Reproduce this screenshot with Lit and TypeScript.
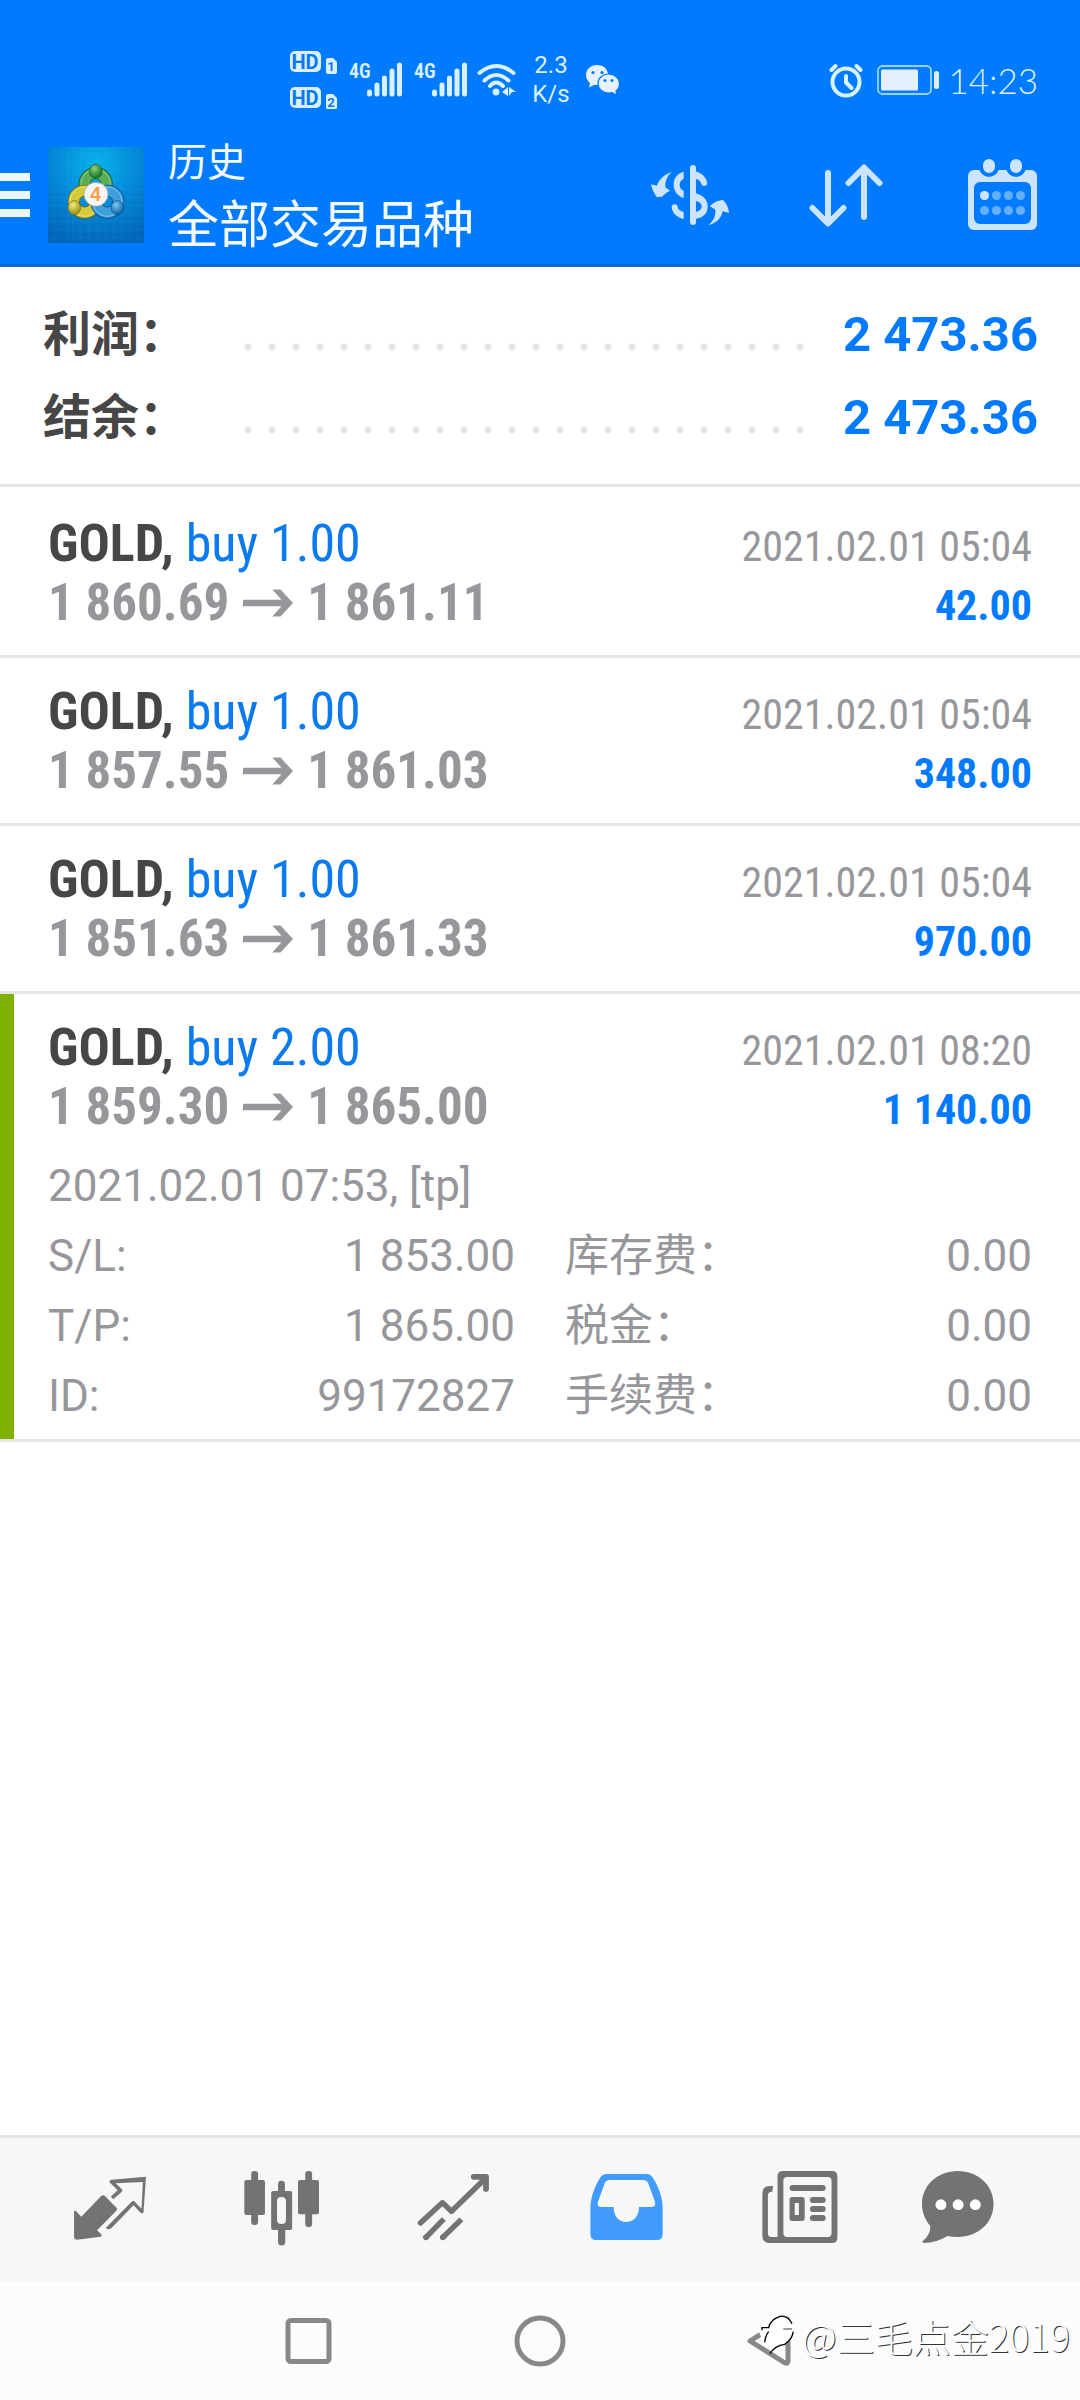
import { LitElement, html, css, svg, nothing } from "lit";
import { customElement, property, state } from "lit/decorators.js";

interface Deal {
  symbol: string;
  side: string;
  open: string;
  close: string;
  time: string;
  profit: string;
  opened?: string;
  details?: [string, string][];
}

const DEALS: Deal[] = [
  { symbol: "GOLD,", side: "buy 1.00", open: "1 860.69", close: "1 861.11", time: "2021.02.01 05:04", profit: "42.00" },
  { symbol: "GOLD,", side: "buy 1.00", open: "1 857.55", close: "1 861.03", time: "2021.02.01 05:04", profit: "348.00" },
  { symbol: "GOLD,", side: "buy 1.00", open: "1 851.63", close: "1 861.33", time: "2021.02.01 05:04", profit: "970.00" },
  {
    symbol: "GOLD,",
    side: "buy 2.00",
    open: "1 859.30",
    close: "1 865.00",
    time: "2021.02.01 08:20",
    profit: "1 140.00",
    opened: "2021.02.01 07:53, [tp]",
    details: [
      ["S/L:", "1 853.00"],
      ["库存费：", "0.00"],
      ["T/P:", "1 865.00"],
      ["税金：", "0.00"],
      ["ID:", "99172827"],
      ["手续费：", "0.00"],
    ],
  },
];

@customElement("status-bar")
export class StatusBar extends LitElement {
  static styles = css`
    :host {
      display: flex;
      align-items: center;
      height: 92px;
      padding: 34px 42px 0 290px;
      gap: 10px;
      color: #d9f1ff;
      font-family: Roboto, sans-serif;
    }
    svg {
      display: block;
      flex: none;
    }
    .tag {
      font: 600 20px "Roboto Condensed", Roboto, sans-serif;
    }
    .hd {
      font: 700 20px Roboto, sans-serif;
    }
    .sim {
      font: 700 13px Roboto, sans-serif;
    }
    .rate {
      width: 48px;
      font-size: 24px;
      line-height: 29px;
      text-align: center;
    }
    .right {
      display: flex;
      align-items: center;
      gap: 8px;
      margin-left: auto;
    }
    .time {
      font: 300 35px/44px Lato, sans-serif;
    }
  `;

  private bars(x: number) {
    return svg`
      <text class="tag" x=${x} y="27" fill="currentColor">4G</text>
      <g stroke="currentColor" stroke-width="5" stroke-linecap="round">
        <path d="M${x + 20.5} 41v2M${x + 28} 34v9M${x + 35.5} 27v16M${x + 43} 20v23M${x + 50.5} 14v29" />
      </g>`;
  }

  render() {
    return html`
      <svg width="49" height="58" viewBox="0 0 49 58" role="img" aria-label="HD 1, HD 2">
        <g fill="currentColor">
          <rect x="0" y="0" width="31" height="21" rx="5" />
          <rect x="0" y="36" width="31" height="21" rx="5" />
          <path d="M36 9q0-2 2-2h5l4 4v10q0 2-2 2h-7q-2 0-2-2z" />
          <path d="M36 45q0-2 2-2h5l4 4v10q0 1-2 1h-7q-2 0-2-1z" />
        </g>
        <g fill="#0a78f0" text-anchor="middle">
          <text class="hd" x="15" y="18">HD</text>
          <text class="hd" x="15" y="54">HD</text>
          <text class="sim" x="41" y="20">1</text>
          <text class="sim" x="41" y="56">2</text>
        </g>
      </svg>
      <svg width="118" height="58" viewBox="0 0 118 58" role="img" aria-label="4G">
        ${this.bars(0)} ${this.bars(65)}
      </svg>
      <svg width="40" height="58" viewBox="0 0 40 58" role="img" aria-label="Wi-Fi">
        <g fill="none" stroke="currentColor" stroke-width="4" stroke-linecap="round">
          <path d="M2.5 22Q19 8 36.500 22M7.500 29.500Q19 18.500 31.500 29.500M13 35Q19 28 26 35" />
        </g>
        <circle cx="19" cy="41" r="3.400" fill="currentColor" />
        <path d="M25 41l6-5v9zM32 36l7 5h-4l-3 4z" fill="currentColor" />
      </svg>
      <div class="rate">2.3<br />K/s</div>
      <svg width="36" height="58" viewBox="0 0 36 58" role="img" aria-label="WeChat">
        <path d="M12 14c-6.500 0-11 4.500-11 10 0 3.500 1.500 6 4 8l-1 4.500 5-2.500h3c6.500 0 11-4 11-10s-4.500-10-11-10z" fill="#e6f3ff" />
        <path d="M23.500 23c-6 0-10.500 4-10.500 9.500s4.500 9.500 10.500 9.500l3.500-.5 5 2.500-1-4c2-1.500 3.500-4 3.500-7.500 0-5.500-5-9.500-11-9.500z" fill="#e6f3ff" stroke="#007aff" stroke-width="1.200" />
        <g fill="#007aff">
          <circle cx="8" cy="21.500" r="1.600" />
          <circle cx="17" cy="21.500" r="1.600" />
          <circle cx="20" cy="29.500" r="1.500" />
          <circle cx="27" cy="29.500" r="1.500" />
        </g>
      </svg>
      <div class="right">
        <svg width="40" height="36" viewBox="0 0 40 36" role="img" aria-label="Alarm">
          <g fill="none" stroke="currentColor" stroke-width="4" stroke-linecap="round" stroke-linejoin="round">
            <circle cx="17" cy="20" r="13.500" />
            <path d="M17 14v6.500l5.500 5.500M2.500 8l4-4M31.500 8l-4-4" />
          </g>
        </svg>
        <svg width="63" height="30" viewBox="0 0 63 30" role="img" aria-label="Battery">
          <rect x="1" y="1" width="53" height="28" rx="4.500" fill="none" stroke="#9ad2ff" stroke-width="1.800" />
          <rect x="4" y="4.500" width="37" height="21" rx="1.500" fill="#e4f0ff" />
          <rect x="57" y="6" width="5" height="18" rx="2.500" fill="currentColor" />
        </svg>
        <div class="time">14:23</div>
      </div>
    `;
  }
}

@customElement("app-logo")
export class AppLogo extends LitElement {
  static styles = css`
    :host,
    svg {
      display: block;
    }
    .num {
      font: 700 58px "Liberation Sans", sans-serif;
    }
  `;

  private person(cx: number, cy: number, hx: number, hy: number, body: string, edge: string, head: string) {
    return svg`
      <circle cx=${cx} cy=${cy} r="33" fill="none" stroke=${edge} stroke-width="36" />
      <circle cx=${cx} cy=${cy} r="33" fill="none" stroke=${body} stroke-width="31" />
      <circle cx=${cx} cy=${cy} r="44" fill="none" stroke="#ffffff" stroke-opacity=".35" stroke-width="3" />
      <ellipse cx=${hx} cy=${hy} rx="19" ry="21" fill=${head} stroke=${edge} stroke-width="2" />`;
  }

  render() {
    const lines = [42, 84, 98, 121, 147, 172, 196, 222, 245, 270, 294];
    return html`
      <svg width="96" height="96" viewBox="24 21 288 288" role="img" aria-label="MetaTrader 4">
        <defs>
          <radialGradient id="sky" cx=".5" cy=".18" r=".85">
            <stop offset="0" stop-color="#08b2ec" />
            <stop offset=".5" stop-color="#0489d8" />
            <stop offset="1" stop-color="#0264b8" />
          </radialGradient>
          <radialGradient id="green" cx=".4" cy=".3" r=".7">
            <stop offset="0" stop-color="#8fd074" />
            <stop offset="1" stop-color="#16702a" />
          </radialGradient>
          <radialGradient id="yellow" cx=".4" cy=".3" r=".7">
            <stop offset="0" stop-color="#f3ea7c" />
            <stop offset="1" stop-color="#998f12" />
          </radialGradient>
          <radialGradient id="blue" cx=".4" cy=".3" r=".7">
            <stop offset="0" stop-color="#7cc8f2" />
            <stop offset="1" stop-color="#0b5fa5" />
          </radialGradient>
        </defs>
        <rect x="24" y="21" width="288" height="288" fill="url(#sky)" />
        <g stroke="#5cc8f5" stroke-opacity=".15" stroke-width="2">
          ${lines.map((v) => svg`<path d="M24 ${v}H312M${v} 21V309" />`)}
        </g>
        ${this.person(167, 132, 167, 94, "#58ad55", "#145c28", "url(#green)")}
        ${this.person(134, 185, 103, 203, "#d3cb3a", "#6d6714", "url(#yellow)")}
        ${this.person(202, 185, 232, 203, "#3d9fdb", "#0d4f8c", "url(#blue)")}
        <circle cx="168" cy="163" r="36" fill="#f6f5f5" stroke="#9a9a8a" stroke-width="2" />
        <text class="num" x="167" y="184" text-anchor="middle" fill="#f7a04a">4</text>
      </svg>
    `;
  }
}

@customElement("tool-bar")
export class ToolBar extends LitElement {
  static styles = css`
    :host {
      display: flex;
      align-items: center;
      height: 138px;
      color: #cce4ff;
    }
    button {
      display: grid;
      place-items: center;
      border: 0;
      padding: 0;
      background: none;
      color: inherit;
    }
    svg {
      display: block;
    }
    .menu {
      width: 30px;
      height: 96px;
      margin-right: 18px;
      color: #f0f8ff;
    }
    .title {
      flex: 1;
      margin-left: 24px;
      padding-bottom: 4px;
      color: #f4faff;
      font-family: "Noto Sans CJK SC", sans-serif;
      white-space: nowrap;
    }
    h1,
    p {
      margin: 0;
      font-weight: 400;
    }
    p {
      font-size: 39px;
      line-height: 56px;
    }
    h1 {
      font-size: 51px;
      line-height: 68px;
    }
    .tool {
      width: 156px;
      height: 138px;
    }
  `;

  render() {
    const dots = [16.5, 28.5, 40.5, 52.5];
    return html`
      <button class="menu" aria-label="菜单">
        <svg width="30" height="44" viewBox="0 0 30 44">
          <path d="M0 4h30M0 22h30M0 40h30" stroke="currentColor" stroke-width="8" />
        </svg>
      </button>
      <app-logo></app-logo>
      <div class="title">
        <p>历史</p>
        <h1>全部交易品种</h1>
      </div>
      <button class="tool" aria-label="交易品种">
        <svg width="78" height="60" viewBox="33 39 234 180" fill="currentColor">
          <rect x="150" y="39" width="18" height="180" rx="9" />
          <path d="M131 59C113 63 101 78 101 98C101 118 113 132 131 138V116C123 113 119 107 119 98C119 90 123 84 131 80Z" />
          <path d="M95 166a9 9 0 0 1 18 0C115 174 121 178 131 180V201C110 196 97 184 95 166Z" />
          <path d="M166 58C185 64 197 74 201 90a9 9 0 0 1-17 6C181 86 176 83 166 80Z" />
          <path d="M166 124C190 130 203 143 203 163C203 185 190 197 166 201V180C178 178 185 172 185 163C185 155 178 149 166 147Z" />
          <path d="M96 60C80 72 75 90 76 106L90 116C78 122 72 128 66 134L50 135C42 124 36 112 33 97L51 101C56 84 72 66 96 60Z" />
          <path d="M205 219C222 206 227 190 226 173L210 163C218 152 233 146 248 144L252 146C260 156 266 168 267 183L248 178C244 198 230 214 205 219Z" />
        </svg>
      </button>
      <button class="tool" aria-label="排序">
        <svg width="76" height="64" viewBox="0 0 76 64">
          <path
            d="M20 10v49M4.500 45L20 60.500L35.500 45M56 54V5M40.500 20L56 4.500L71.500 20"
            fill="none" stroke="currentColor" stroke-width="6" stroke-linecap="round" stroke-linejoin="round"
          />
        </svg>
      </button>
      <button class="tool" aria-label="日历">
        <svg width="70" height="77" viewBox="-1 -1 70 77">
          <rect x="0" y="12" width="69" height="60" rx="6" fill="currentColor" />
          <rect x="6" y="24" width="57" height="42" rx="6" fill="#007aff" />
          <g fill="currentColor" stroke="#007aff" stroke-width="4">
            <rect x="13" y="-1" width="16" height="18" rx="8" />
            <rect x="40" y="-1" width="16" height="18" rx="8" />
          </g>
          <g fill="#66afff">
            ${dots.map((x) => svg`<circle cx=${x} cy="37.500" r="4.500" /><circle cx=${x} cy="52.500" r="4.500" />`)}
          </g>
          <circle cx="16.500" cy="37.500" r="4.500" fill="#cce4ff" />
        </svg>
      </button>
    `;
  }
}

@customElement("deal-row")
export class DealRow extends LitElement {
  @property({ attribute: false }) deal!: Deal;
  @state() private open = true;

  static styles = css`
    :host {
      display: block;
      border-bottom: 3px solid #e5e5e5;
      color: #97979b;
      font-family: Roboto, "Noto Sans CJK SC", sans-serif;
    }
    .row {
      padding-bottom: 8px;
    }
    .expanded {
      background: linear-gradient(#7fb100, #7fb100) no-repeat left / 14px 100%;
    }
    .head {
      display: block;
      width: 100%;
      border: 0;
      padding: 24px 48px 16px;
      background: none;
      color: inherit;
      font-family: "Roboto Condensed", "Liberation Sans Narrow", sans-serif;
      text-align: left;
    }
    .line {
      display: flex;
      align-items: baseline;
      justify-content: space-between;
      height: 59px;
      font-size: 52px;
      line-height: 59px;
      white-space: nowrap;
    }
    .line + .line {
      height: 58px;
    }
    .symbol {
      color: #464646;
      font-weight: 700;
    }
    .side {
      color: #0a7aee;
    }
    .prices {
      display: flex;
      align-items: baseline;
      gap: 14px;
      font-size: 51px;
      font-weight: 700;
    }
    .arrow {
      align-self: center;
    }
    .time,
    .profit {
      font-size: 42px;
    }
    .profit {
      color: #007aff;
      font-weight: 700;
    }
    .more {
      padding: 0 48px;
      font-size: 44px;
      line-height: 70px;
    }
    .more p,
    dl,
    dd {
      margin: 0;
    }
    dl {
      display: grid;
      grid-template-columns: 1fr 1fr;
      column-gap: 50px;
    }
    .pair {
      display: flex;
      justify-content: space-between;
    }
  `;

  render() {
    const d = this.deal;
    const expanded = Boolean(d.details) && this.open;
    return html`
      <article class="row ${expanded ? "expanded" : ""}">
        <button class="head" aria-expanded=${expanded} @click=${() => (this.open = !this.open)}>
          <span class="line">
            <span><span class="symbol">${d.symbol}</span> <span class="side">${d.side}</span></span>
            <span class="time">${d.time}</span>
          </span>
          <span class="line">
            <span class="prices">
              ${d.open}
              <svg class="arrow" width="50" height="28" viewBox="0 0 52 28" role="img" aria-label="→">
                <path d="M0 10.500H40L30.500 0H39L52 14L39 28H30.500L40 17.500H0Z" fill="currentColor" />
              </svg>
              ${d.close}
            </span>
            <span class="profit">${d.profit}</span>
          </span>
        </button>
        ${expanded
          ? html`<div class="more">
              <p>${d.opened}</p>
              <dl>
                ${d.details!.map(([k, v]) => html`<div class="pair"><dt>${k}</dt><dd>${v}</dd></div>`)}
              </dl>
            </div>`
          : nothing}
      </article>
    `;
  }
}

@customElement("tab-bar")
export class TabBar extends LitElement {
  static styles = css`
    :host {
      display: block;
      border-top: 3px solid #e5e5e5;
      background: #f7f7f7;
    }
    nav {
      display: grid;
      grid-template-columns: repeat(6, 1fr);
      padding: 0 24px;
    }
    button {
      display: grid;
      place-items: center;
      height: 144px;
      border: 0;
      padding: 0;
      background: none;
      color: #737373;
    }
    .active {
      color: #429bff;
    }
  `;

  private tab(label: string, x: number, shape: unknown, active = false) {
    return html`
      <button class=${active ? "active" : ""} aria-label=${label} aria-pressed=${active}>
        <svg width="96" height="96" viewBox="${x} 126 279 288" preserveAspectRatio="none" fill="currentColor">
          ${shape}
        </svg>
      </button>
    `;
  }

  render() {
    return html`
      <nav>
        ${this.tab("行情", 180, svg`
          <path d="M215 273q4-2 8 3l13 14 58-62q5-5 11 0l34 36q3 4-1 8l-56 59 12 12q4 5-2 7l-68 9q-9 0-9-9z" />
          <path d="M322 230l7 8 25-23q3-4 0-7l-18-18 79-4-4 80-21-22q-3-3-6 0l-77 80q8 7 16 1l65-69 19 21q4 4 9 2l1-4 7-105-100 9q-9 2-4 10l22 22z" />`)}
        ${this.tab("图表", 679, svg`
          <rect x="709" y="180" width="60" height="105" rx="6" />
          <rect x="729" y="153" width="20" height="162" rx="9" />
          <rect x="865" y="180" width="61" height="103" rx="6" />
          <rect x="886" y="153" width="20" height="168" rx="9" />
          <path d="M807 213v-21a10 10 0 0 1 20 0v21h15q6 0 6 6v105q0 6-6 6h-14v36a10 10 0 0 1-21 0v-36h-14q-6 0-6-6V219q0-6 6-6zM804 243v57q0 12 13 12t13-12v-57q0-12-13-12t-13 12z" fill-rule="evenodd" />`)}
        ${this.tab("交易", 1179, svg`
          <g fill="none" stroke="currentColor" stroke-width="16" stroke-linejoin="round">
            <path d="M1221 309L1285 248L1311 274L1405 180" stroke-linecap="round" />
            <path d="M1376 170.500H1411.500V207" stroke-width="17" stroke-linecap="round" />
            <path d="M1289 297L1237 352M1340 298L1286 352" />
          </g>
          <circle cx="1237" cy="352" r="8.500" /><circle cx="1286" cy="352" r="8.500" />`)}
        ${this.tab("历史", 110, svg`
          <path fill-rule="evenodd" d="M194 162H308Q322 162 328 174C344 200 356 232 356 262V342Q356 360 340 360H162Q146 360 146 342V262C147 232 158 200 174 174Q180 162 194 162ZM203 180Q192 180 188 188L168 246Q164 261 178 261H214V268C216 291 230 306 250 306S285 291 287 268V261H322Q338 261 334 246L314 190Q309 180 299 180Z" />`, true)}
        ${this.tab("新闻", 610, svg`
          <path fill-rule="evenodd" d="M706 153H848Q864 153 864 169V353Q864 369 848 369H668Q646 369 646 347V220Q646 198 668 198H677L675 215Q662 215 662 226V340Q662 351 672 351H690V169Q690 153 706 153ZM718 171Q707 171 707 182V340Q707 351 718 351H836Q847 351 847 340V182Q847 171 836 171Z" />
          <rect x="725" y="195" width="105" height="18" rx="9" />
          <path fill-rule="evenodd" d="M733 231H761Q769 231 769 239V295Q769 303 761 303H733Q725 303 725 295V239Q725 231 733 231ZM740 249V285H752V249Z" />
          <rect x="784" y="231" width="46" height="18" rx="9" />
          <rect x="784" y="258" width="46" height="18" rx="9" />
          <rect x="784" y="285" width="46" height="18" rx="9" />`)}
        ${this.tab("消息", 1109, svg`
          <path d="M1213 153C1272 153 1317 196 1317 252C1317 308 1272 351 1213 351Q1197 351 1183 348Q1150 369 1115 369Q1107 367 1112 362Q1134 345 1133 318C1117 298 1109 276 1109 252C1109 196 1154 153 1213 153Z" />
          <g fill="#fff">
            <circle cx="1164" cy="254" r="16" />
            <circle cx="1214" cy="254" r="16" />
            <circle cx="1264" cy="254" r="16" />
          </g>`)}
      </nav>
    `;
  }
}

@customElement("system-nav")
export class SystemNav extends LitElement {
  static styles = css`
    :host {
      position: relative;
      display: flex;
      justify-content: center;
      height: 118px;
      background: #fcfcfc;
      color: #888;
    }
    button {
      display: grid;
      place-items: center;
      width: 232px;
      border: 0;
      padding: 0;
      background: none;
      color: inherit;
    }
    .shape {
      fill: none;
      stroke: currentColor;
      stroke-width: 5;
      stroke-linejoin: round;
    }
    .credit {
      position: absolute;
      right: 10px;
      top: 26px;
      display: flex;
      align-items: center;
      gap: 4px;
      color: #fff;
      font: 300 38px/56px "Noto Sans CJK SC", sans-serif;
      text-shadow: 1px 1px 0 #333;
    }
  `;

  render() {
    return html`
      <button aria-label="最近任务">
        <svg width="60" height="60"><rect class="shape" x="10" y="9.500" width="41" height="41" rx="3" /></svg>
      </button>
      <button aria-label="主页">
        <svg width="60" height="60"><circle class="shape" cx="30" cy="30" r="23" /></svg>
      </button>
      <button aria-label="返回">
        <svg width="60" height="60"><path class="shape" d="M8 30L43 8Q46 7 46 10V50Q46 53 43 52Z" /></svg>
      </button>
      <div class="credit">
        <svg width="40" height="50" viewBox="58 30 120 150">
          <path d="M60 90Q66 58 100 44Q140 34 162 66Q170 92 160 112Q142 134 116 144Q96 140 84 134Q70 118 60 90Z" fill="#fff" />
          <g fill="none" stroke="#000" stroke-width="4">
            <path d="M70 88V80H90Q94 56 124 46Q146 42 160 68M90 92Q80 104 78 124M164 92Q160 116 138 130Q108 134 94 158" />
            <path d="M134 84H160" stroke="#888" stroke-width="5" />
          </g>
        </svg>
        <span>@三毛点金2019</span>
      </div>
    `;
  }
}

@customElement("app-root")
export class AppRoot extends LitElement {
  static styles = css`
    :host {
      display: flex;
      flex-direction: column;
      min-height: 100vh;
      background: #fff;
      font-family: Roboto, "Noto Sans CJK SC", sans-serif;
    }
    header {
      border-bottom: 3px solid #1068c8;
      background: #007aff;
    }
    main {
      flex: 1;
    }
    .summary {
      margin: 0;
      border-bottom: 3px solid #e5e5e5;
      padding: 26px 42px 25px 43px;
      font-size: 48px;
      font-weight: 700;
      line-height: 83px;
    }
    .total {
      display: flex;
      align-items: baseline;
      height: 83px;
    }
    dt {
      width: 201px;
      color: #464646;
    }
    .dots {
      flex: 1;
      height: 8px;
      margin-right: 32px;
      background: radial-gradient(circle at 4px 4px, #e5e5e5 3px, #e5e5e5 3px, transparent 4px) 0 0 / 24px 8px repeat-x;
    }
    dd {
      margin: 0;
      color: #007aff;
      font-size: 49px;
    }
    .deals {
      padding-top: 3px;
    }
  `;

  render() {
    const totals = [
      ["利润：", "2 473.36"],
      ["结余：", "2 473.36"],
    ];
    return html`
      <header>
        <status-bar></status-bar>
        <tool-bar></tool-bar>
      </header>
      <main>
        <dl class="summary">
          ${totals.map(([k, v]) => html`<div class="total"><dt>${k}</dt><span class="dots"></span><dd>${v}</dd></div>`)}
        </dl>
        <section class="deals">${DEALS.map((d) => html`<deal-row .deal=${d}></deal-row>`)}</section>
      </main>
      <tab-bar></tab-bar>
      <system-nav></system-nav>
    `;
  }
}
